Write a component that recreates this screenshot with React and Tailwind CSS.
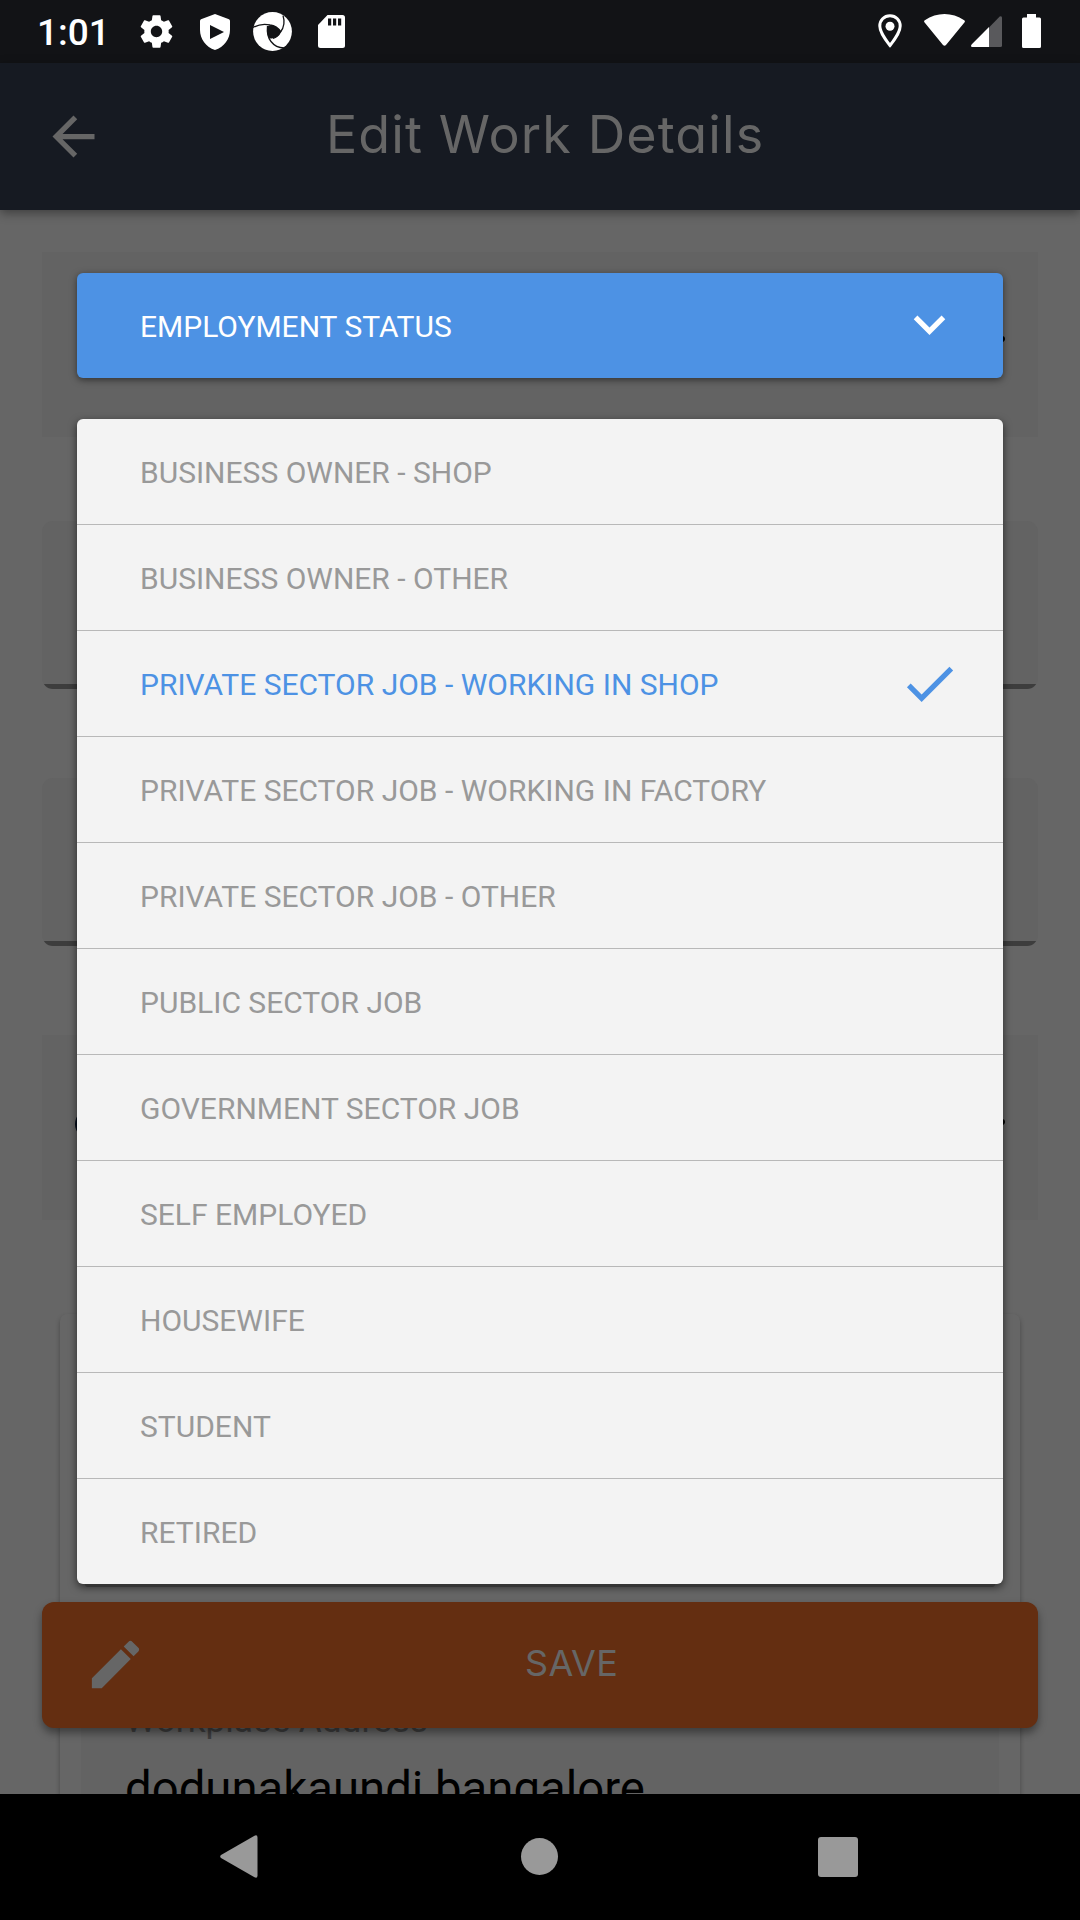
const OPTIONS = [
  'BUSINESS OWNER - SHOP',
  'BUSINESS OWNER - OTHER',
  'PRIVATE SECTOR JOB - WORKING IN SHOP',
  'PRIVATE SECTOR JOB - WORKING IN FACTORY',
  'PRIVATE SECTOR JOB - OTHER',
  'PUBLIC SECTOR JOB',
  'GOVERNMENT SECTOR JOB',
  'SELF EMPLOYED',
  'HOUSEWIFE',
  'STUDENT',
  'RETIRED',
];
const SELECTED = 2;

function Icon({ d, className }) {
  return (
    <svg viewBox="0 0 24 24" fill="currentColor" className={className}>
      <path d={d} />
    </svg>
  );
}

const GEAR =
  'M19.43 12.98c.04-.32.07-.64.07-.98s-.03-.66-.07-.98l2.11-1.65c.19-.15.24-.42.12-.64l-2-3.46c-.12-.22-.39-.3-.61-.22l-2.49 1c-.52-.4-1.08-.73-1.69-.98l-.38-2.65C14.46 2.18 14.25 2 14 2h-4c-.25 0-.46.18-.49.42l-.38 2.65c-.61.25-1.17.59-1.69.98l-2.49-1c-.23-.09-.49 0-.61.22l-2 3.46c-.13.22-.07.49.12.64l2.11 1.65c-.04.32-.07.65-.07.98s.03.66.07.98l-2.11 1.65c-.19.15-.24.42-.12.64l2 3.46c.12.22.39.3.61.22l2.49-1c.52.4 1.08.73 1.69.98l.38 2.65c.03.24.24.42.49.42h4c.25 0 .46-.18.49-.42l.38-2.65c.61-.25 1.17-.59 1.69-.98l2.49 1c.23.09.49 0 .61-.22l2-3.46c.12-.22.07-.49-.12-.64l-2.11-1.65zM12 15.5c-1.93 0-3.5-1.57-3.5-3.5s1.57-3.5 3.5-3.5 3.5 1.57 3.5 3.5-1.57 3.5-3.5 3.5z';

function StatusBar() {
  return (
    <div className="flex h-[63px] shrink-0 items-start bg-[#121316] text-white">
      <span className="ml-[37px] mt-[11px] w-[104px] text-[37px] leading-[44px] font-medium">
        1:01
      </span>
      <Icon d={GEAR} className="mt-[12px] -ml-[4px] size-[39px]" />
      <svg viewBox="0 0 30 36" className="mt-[14px] ml-[24px] h-[36px] w-[30px]" fill="currentColor">
        <path
          fillRule="evenodd"
          d="M15 0L29 5.2Q30 5.6 30 7V16C30 25 24 33 15 36C6 33 0 25 0 16V7Q0 5.6 1 5.2ZM10 11V25L24 18Z"
        />
      </svg>
      <svg viewBox="0 0 39 39" className="mt-[12px] ml-[23px] size-[39px]" fill="none">
        <circle cx="19.5" cy="19.5" r="19.4" fill="#fff" />
        <path
          d="M14.5 14.5C18 11.8 22.5 13 28 19.5C26 24 23 26.5 16.5 26.5C14 23 13.5 19 14.5 14.5Z"
          fill="#121316"
        />
        <g stroke="#121316" strokeWidth="1.3">
          <path d="M0 15.5Q8 11 17 13Q24 14 28 20" />
          <path d="M30 3.500Q33 13 27.500 20Q25 25 20 26.500" />
          <path d="M14.500 14Q13.500 24 18 29.500Q23 36 31 36" />
        </g>
      </svg>
      <svg viewBox="0 0 27 33" className="mt-[15px] ml-[26px] h-[33px] w-[27px]">
        <path d="M9.500 0H24.500Q27 0 27 2.500V30.500Q27 33 24.500 33H2.500Q0 33 0 30.500V10Z" fill="#fff" />
        <path d="M10 3.500h3.200v7H10zM15 3.500h3.200v7H15zM20 3.500h3.200v7H20z" fill="#121316" />
      </svg>
      <svg viewBox="0 0 24 34" className="mt-[14px] ml-[533px] h-[34px] w-[24px]">
        <path
          d="M12 1.800C6 1.800 1.800 6.400 1.800 12C1.800 19 12 31.500 12 31.500S22.200 19 22.200 12C22.200 6.400 18 1.800 12 1.800Z"
          fill="none"
          stroke="#fff"
          strokeWidth="3"
        />
        <circle cx="12" cy="12.300" r="4.500" fill="#fff" />
      </svg>
      <svg viewBox="0 0 41 32" className="mt-[14px] ml-[22px] h-[32px] w-[41px]">
        <path
          d="M0.600 8.500C-.2 7.600 0 6.900 .8 6.300C13 -2.100 28 -2.100 40.200 6.300C41 6.900 41.200 7.600 40.400 8.500L22 31Q20.500 32.600 19 31Z"
          fill="#fff"
        />
      </svg>
      <svg viewBox="0 0 31 31" className="mt-[16px] ml-[6px] size-[31px]">
        <path d="M18 11.500L28.700 .6Q31 -.6 31 2V29.500Q31 31 29.500 31H18Z" fill="#59595c" />
        <path d="M18 11V31H1.200Q-.8 30.600 .6 28.600Z" fill="#fff" />
      </svg>
      <svg viewBox="0 0 19 34" className="mt-[14px] ml-[20px] h-[34px] w-[19px]" fill="#fff">
        <path d="M5 0H14V3.500H17.500Q19 3.500 19 5V32.500Q19 34 17.500 34H1.500Q0 34 0 32.500V5Q0 3.500 1.500 3.500H5Z" />
      </svg>
    </div>
  );
}

function Header() {
  return (
    <header className="relative z-10 flex h-[147px] shrink-0 items-center bg-[#161a22] text-[#666666] shadow-[0_3px_10px_rgba(0,0,0,0.4)]">
      <Icon d="M20 11H7.830l5.590-5.590L12 4l-8 8 8 8 1.410-1.410L7.830 13H20v-2z" className="ml-[42px] size-[63px]" />
      <h1 className="ml-[221px] -mt-[4px] whitespace-nowrap font-['Inter'] text-[52px] leading-[64px] tracking-[1.1px] [font-feature-settings:'cv11']">
        Edit Work Details
      </h1>
    </header>
  );
}

function Caret({ className }) {
  return (
    <svg viewBox="0 0 30 18" className={className}>
      <path d="M3 3H27L15 15Z" fill="#000" stroke="#000" strokeWidth="6" strokeLinejoin="round" />
    </svg>
  );
}

function TextField({ className }) {
  return (
    <div className={className}>
      <div className="flex h-[168px] flex-col justify-end overflow-hidden rounded-[11px] bg-[#636363]">
        <div className="h-[5px] bg-[#3d3d3d]" />
      </div>
    </div>
  );
}

function Form() {
  return (
    <div className="flex grow flex-col overflow-hidden px-[42px] pt-[42px]">
      <div className="flex h-[185px] shrink-0 justify-end bg-[#636363] pt-[84px] pr-[33px]">
        <Caret className="h-[18px] w-[30px]" />
      </div>
      <TextField className="mt-[84px] shrink-0" />
      <TextField className="mt-[89px] shrink-0" />
      <div className="mt-[89px] flex h-[185px] shrink-0 items-start justify-between bg-[#636363] pt-[74px] pr-[33px] pl-[33px]">
        <div className="size-[30px] rounded-full bg-[#020a18]" />
        <Caret className="mt-[10px] h-[18px] w-[30px]" />
      </div>
      <div className="mx-[18px] mt-[94px] flex h-[600px] shrink-0 flex-col rounded-[7px] bg-[#666666] px-[21px] pt-[366px] shadow-[0_3px_5px_rgba(0,0,0,0.3)]">
        <div className="h-[200px] bg-[#636363] pt-[18px] pl-[44px]">
          <div className="text-[35.200px] leading-[44px] text-[#3d3d3d]">Workplace Address</div>
          <div className="mt-[19px] text-[47.300px] leading-[56px] text-black">dodunakaundi bangalore</div>
        </div>
      </div>
    </div>
  );
}

function SaveButton() {
  return (
    <button className="absolute top-[1602px] left-[42px] flex h-[126px] w-[996px] items-center rounded-[12px] bg-[#642e11] text-[#666666] shadow-[0_5px_9px_rgba(0,0,0,0.4)]">
      <Icon
        d="M3 17.250V21h3.750L17.810 9.940l-3.750-3.750L3 17.250zM20.710 7.040c.39-.39.39-1.020 0-1.410l-2.340-2.340c-.39-.39-1.020-.39-1.410 0l-1.830 1.830 3.750 3.750 1.830-1.830z"
        className="-mt-[2px] ml-[42px] size-[63px]"
      />
      <span className="-mt-[4px] ml-[378px] font-['Inter'] text-[36px] leading-[48px] tracking-[0.3px]">SAVE</span>
    </button>
  );
}

function StatusDialog() {
  return (
    <div className="absolute top-[273px] left-[77px] flex w-[926px] flex-col gap-[41px] text-[30px] leading-[42px]">
      <div className="flex h-[105px] items-center justify-between rounded-[6px] bg-[#4d92e4] pr-[42px] pl-[63px] text-white shadow-[0_2px_7px_rgba(0,0,0,0.5)]">
        <span className="pt-[2px]">EMPLOYMENT STATUS</span>
        <Icon d="M7.410 8.590L12 13.170l4.590-4.580L18 10l-6 6-6-6 1.410-1.410z" className="-mt-[3px] size-[63px]" />
      </div>
      <div className="flex flex-col">
        <ul className="z-10 divide-y divide-[#b8b8b8] rounded-[6px] bg-[#f3f3f3] text-[#999999] shadow-[0_3px_9px_rgba(0,0,0,0.6)]">
          {OPTIONS.map((option, i) => (
            <li
              key={option}
              className={
                i === SELECTED
                  ? 'flex h-[106px] items-center justify-between pr-[42px] pl-[63px] text-[#4d92e4] last:h-[105px]'
                  : 'flex h-[106px] items-center justify-between pr-[42px] pl-[63px] last:h-[105px]'
              }
            >
              <span className="pt-[2px]">{option}</span>
              {i === SELECTED && (
                <Icon d="M9 16.170L4.830 12l-1.420 1.410L9 19 21 7l-1.410-1.410z" className="size-[63px]" />
              )}
            </li>
          ))}
        </ul>
        <div className="z-10 mx-[8px] h-[3px] rounded-b-[3px] bg-[#343434]" />
      </div>
    </div>
  );
}

function NavBar() {
  return (
    <nav className="relative z-10 flex h-[126px] shrink-0 items-center bg-black pb-[1px] pl-[220px] text-[#999999]">
      <svg viewBox="0 0 38 43" className="h-[43px] w-[38px]" fill="currentColor">
        <path d="M1 20L34.500 .7Q37.500 -.6 37.500 2.500V40.500Q37.500 43.600 34.500 42.300L1 23Q-.6 21.500 1 20Z" />
      </svg>
      <span className="ml-[263px] size-[37px] rounded-full bg-[#999999]" />
      <span className="ml-[260px] size-[40px] rounded-[3px] bg-[#999999]" />
    </nav>
  );
}

export default function App() {
  return (
    <div className="relative flex h-[1920px] w-[1080px] flex-col overflow-hidden bg-[#666666] font-['Roboto',sans-serif]">
      <StatusBar />
      <Header />
      <Form />
      <SaveButton />
      <StatusDialog />
      <NavBar />
    </div>
  );
}
